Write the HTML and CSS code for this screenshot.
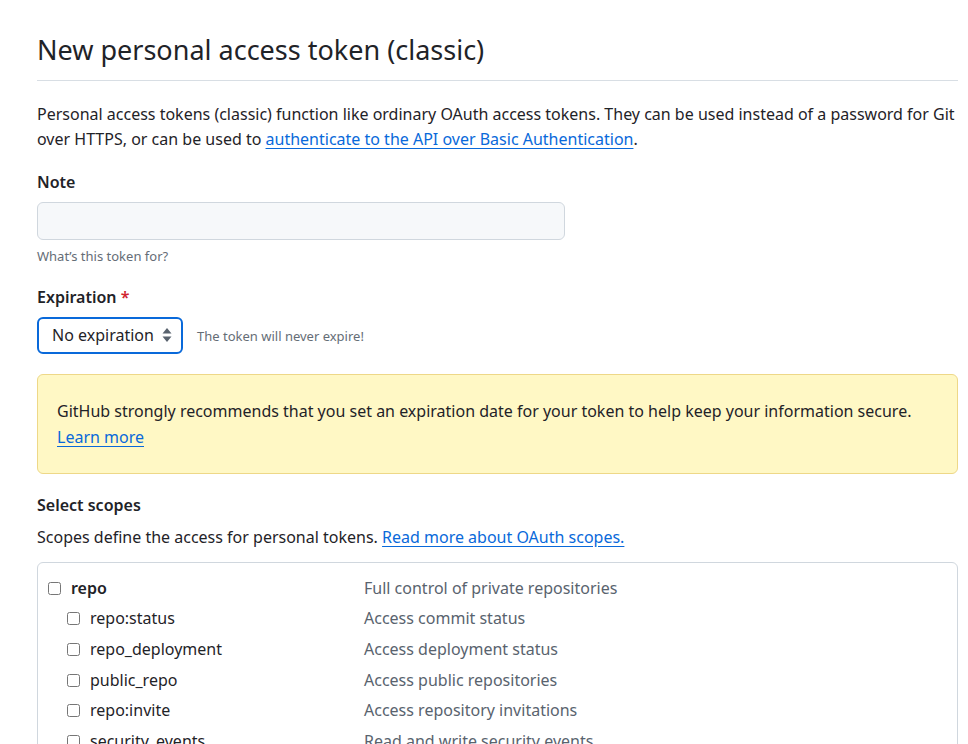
FILE: index.html
```html
<!DOCTYPE html>
<html lang="en">
<head>
<meta charset="utf-8">
<title>New personal access token (classic)</title>
<link rel="stylesheet" href="styles.css">
</head>
<body>
<main class="page">
  <h1 class="title">New personal access token (classic)</h1>
  <p class="intro">Personal access tokens (classic) function like ordinary OAuth access tokens. They can be used instead of a password for Git over HTTPS, or can be used to <a href="#" class="link">authenticate to the API over Basic Authentication</a>.</p>

  <div class="field">
    <label class="label" for="note">Note</label>
    <input id="note" class="input" type="text">
    <p class="hint">What’s this token for?</p>
  </div>

  <div class="field">
    <label class="label" for="exp">Expiration <span class="req">*</span></label>
    <div class="exp-row">
      <div class="select-wrap">
        <select id="exp" class="select"><option>No expiration</option></select>
        <svg class="select-icon" width="10" height="16" viewBox="0 0 10 16" aria-hidden="true"><path d="M5 1 L9.5 6.5 H0.5 Z M5 15 L9.5 9.5 H0.5 Z" fill="#59636e"/></svg>
      </div>
      <span class="exp-note">The token will never expire!</span>
    </div>
  </div>

  <div class="flash">GitHub strongly recommends that you set an expiration date for your token to help keep your information secure.<br><a href="#" class="link">Learn more</a></div>

  <h2 class="label section">Select scopes</h2>
  <p class="scopes-desc">Scopes define the access for personal tokens. <a href="#" class="link">Read more about OAuth scopes.</a></p>

  <div class="scopes">
    <div class="row parent"><label class="name"><input type="checkbox"><span class="bold">repo</span></label><span class="desc">Full control of private repositories</span></div>
    <div class="row child"><label class="name"><input type="checkbox"><span>repo:status</span></label><span class="desc">Access commit status</span></div>
    <div class="row child"><label class="name"><input type="checkbox"><span>repo_deployment</span></label><span class="desc">Access deployment status</span></div>
    <div class="row child"><label class="name"><input type="checkbox"><span>public_repo</span></label><span class="desc">Access public repositories</span></div>
    <div class="row child"><label class="name"><input type="checkbox"><span>repo:invite</span></label><span class="desc">Access repository invitations</span></div>
    <div class="row child"><label class="name"><input type="checkbox"><span>security_events</span></label><span class="desc">Read and write security events</span></div>
  </div>
</main>
</body>
</html>
```

FILE: styles.css
```css
* { box-sizing: border-box; }
html, body { margin: 0; padding: 0; background: #ffffff; }
body {
  font-family: "Noto Sans", "Open Sans", sans-serif;
  color: #1f2328;
  font-size: 16px;
  line-height: 25px;
  overflow: hidden;
  height: 744px;
}
.page {
  padding: 29px 10px 0 37px;
}
.title {
  margin: 0;
  font-size: 27px;
  font-weight: 400;
  line-height: 42px;
  padding-bottom: 9px;
  border-bottom: 1px solid #d8dee4;
}
.intro {
  margin: 21px 0 18px;
}
.link {
  color: #0969da;
  text-decoration: underline;
  text-underline-offset: 3px;
}
.field { margin-bottom: 19px; }
.label {
  display: block;
  font-weight: 600;
  font-size: 16px;
  line-height: 25px;
  margin: 0 0 7px;
}
.req { color: #d1242f; }
.input {
  display: block;
  width: 528px;
  height: 38px;
  background: #f6f8fa;
  border: 1px solid #d0d7de;
  border-radius: 6px;
  font: inherit;
}
.hint {
  margin: 6px 0 0;
  font-size: 13px;
  line-height: 20px;
  color: #656d76;
}
.exp-row {
  display: flex;
  align-items: center;
  gap: 14px;
}
.select-wrap {
  position: relative;
  display: flex;
}
.select {
  appearance: none;
  -webkit-appearance: none;
  width: 146px;
  height: 37px;
  border: 2px solid #0969da;
  border-radius: 6px;
  background: #ffffff;
  font: inherit;
  color: #1f2328;
  padding: 0 0 0 13px;
  outline: none;
}
.select-icon {
  position: absolute;
  right: 11px;
  top: 10px;
  pointer-events: none;
}
.exp-note {
  font-size: 13px;
  color: #656d76;
  line-height: 20px;
}
.flash {
  margin-top: 20px;
  background: #fff8c5;
  border: 1px solid #eed888;
  border-radius: 6px;
  padding: 23px 19px 23px;
  line-height: 26px;
}
.section {
  margin: 19px 0 7px;
}
.scopes-desc {
  margin: 0 0 12px;
}
.scopes {
  border: 1px solid #d0d7de;
  border-radius: 6px;
  padding: 10px 10px 0;
}
.row {
  display: grid;
  grid-template-columns: 316px 1fr;
  height: 30.6px;
  align-items: center;
}
.name {
  display: flex;
  align-items: center;
  gap: 10px;
}
.child .name { padding-left: 19px; }
.name input {
  margin: 0;
  width: 13px;
  height: 13px;
}
.bold { font-weight: 600; }
.desc { color: #59636e; }
```
